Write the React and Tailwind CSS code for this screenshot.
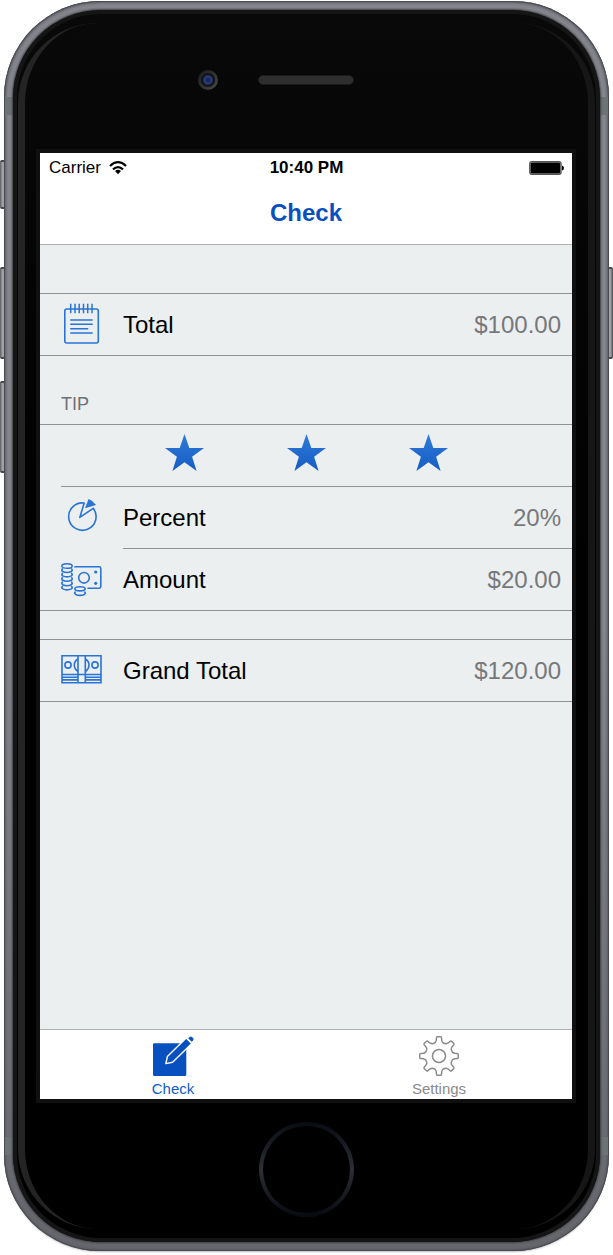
import React from "react";

const BLUE = "#2a74d6";

function NotepadIcon() {
  return (
    <svg viewBox="0 0 40 40" className="size-10 overflow-visible" fill="none" stroke={BLUE} strokeWidth="1.6" aria-hidden="true">
      <rect x="3.8" y="4" width="33.5" height="34" rx="2" />
      <path d="M9.7-1.2V8.3M14-1.2V8.3M18.2-1.2V8.3M22.5-1.2V8.3M26.7-1.2V8.3M31-1.2V8.3" strokeWidth="1.5" />
      <path d="M9.2 15H31.7M9.2 19.3H31.7M9.2 23.7H27.3M9.2 28H31.7" />
    </svg>
  );
}

function PieIcon() {
  return (
    <svg viewBox="0 0 40 40" className="size-10 overflow-visible" fill="none" stroke={BLUE} strokeWidth="1.6" strokeLinejoin="round" aria-hidden="true">
      <path d="M23.2 5 18.8 19.4 32.3 10.3A13.7 13.7 0 1 1 23.2 5Z" />
      <path d="M24 10.2 27.6 1Q32.2 2.6 35 7Z" fill={BLUE} stroke="none" />
    </svg>
  );
}

function CoinsIcon() {
  return (
    <svg viewBox="0 0 40 40" className="size-10 overflow-visible" fill="none" stroke={BLUE} strokeWidth="1.6" aria-hidden="true">
      <ellipse cx="6" cy="6" rx="5.2" ry="2.3" />
      {[10.2, 14.6, 19, 23.4, 27.6].map((y) => (
        <path key={y} d={`M1.8 ${y - 1.8}Q-.2 ${y} 1.8 ${y + 1.3}Q6 ${y + 3.3} 10.2 ${y + 1.3}Q12.2 ${y} 10.2 ${y - 1.8}`} />
      ))}
      <path d="M13.3 6.8H38.2Q39.8 6.8 39.8 8.4V26.6Q39.8 28.2 38.2 28.2H26.4" />
      <circle cx="23" cy="17.8" r="5.3" />
      <circle cx="34.7" cy="12" r="1.6" fill={BLUE} stroke="none" />
      <circle cx="34.7" cy="23.3" r="1.6" fill={BLUE} stroke="none" />
      <ellipse cx="19" cy="28.8" rx="5.2" ry="2.1" />
      <path d="M14.6 31.6Q12.8 33.2 14.6 34.4Q19 36.4 23.4 34.4Q25.2 33.2 23.4 31.6" />
    </svg>
  );
}

function CashIcon() {
  return (
    <svg viewBox="0 0 40 40" className="size-10 overflow-visible" fill="none" stroke={BLUE} strokeWidth="1.6" aria-hidden="true">
      <path d="M1 4.8H40V31.7H1ZM1 23.5H40M17 4.8V31.7M24.3 4.8V31.7" />
      <path d="M1 26.2H17M1 28.9H17M24.3 26.2H40M24.3 28.9H40" />
      <circle cx="7" cy="14" r="3.1" />
      <circle cx="34" cy="14" r="3.1" />
      <path d="M17 8Q13.3 10 13.3 14T17 20.5M24.3 8Q28 10 28 14T24.3 20.5" />
    </svg>
  );
}

function StarIcon({ id }) {
  return (
    <svg viewBox="0 0 39 37" className="h-[37px] w-[39px]" aria-hidden="true">
      <defs>
        <linearGradient id={id} x1="0" y1="0" x2="0" y2="1">
          <stop offset="0" stopColor="#2f7bd8" />
          <stop offset="1" stopColor="#165cc4" />
        </linearGradient>
      </defs>
      <path fill={`url(#${id})`} d="M19.5 0 24.3 14.1H39L27.1 22.7 31.6 37 19.5 28.3 7.4 37 11.9 22.7 0 14.1H14.7Z" />
    </svg>
  );
}

function ComposeIcon() {
  return (
    <svg viewBox="0 0 41 40" className="h-10 w-[41px] overflow-visible" aria-hidden="true">
      <path fill="#0850c0" d="M1.3 7.3H32Q33.3 7.3 33.3 8.6V38.7Q33.3 40 32 40H1.3Q0 40 0 38.7V8.6Q0 7.3 1.3 7.3Z" />
      <path d="M12.8 27.6 14.4 20.6 33.2 1.9 38.8 7.4 19.6 26.2Z" fill="#0850c0" stroke="#fff" strokeWidth="1.4" strokeLinejoin="round" />
      <path d="M35.2 2.3 36.7.9Q37.8-.1 38.9.9L40.1 2.1Q41.1 3.2 40.1 4.3L38.6 5.7Z" fill="#0850c0" />
    </svg>
  );
}

function gearPath() {
  const point = (r, deg) => {
    const a = ((deg - 90) * Math.PI) / 180;
    return `${(20.5 + r * Math.cos(a)).toFixed(2)} ${(20.5 + r * Math.sin(a)).toFixed(2)}`;
  };
  let d = "";
  for (let i = 0; i < 8; i++) {
    const c = i * 45;
    d += `${i ? "L" : "M"}${point(18.8, c - 8)}Q${point(19.9, c - 7.5)} ${point(19.8, c - 5)}`;
    d += `L${point(19.8, c + 5)}Q${point(19.9, c + 7.5)} ${point(18.8, c + 8)}`;
    d += `L${point(16.3, c + 10)}Q${point(14.6, c + 13)} ${point(14.2, c + 17)}`;
    d += `L${point(14.2, c + 28)}Q${point(14.6, c + 32)} ${point(16.3, c + 35)}`;
  }
  return d + "Z";
}

function GearIcon() {
  return (
    <svg viewBox="0 0 41 41" className="size-10" fill="none" stroke="#8a8a8a" strokeWidth="1.5" strokeLinejoin="round" aria-hidden="true">
      <path d={gearPath()} />
      <circle cx="20.5" cy="20.5" r="6.7" />
    </svg>
  );
}

function WifiIcon() {
  return (
    <svg viewBox="0 0 18 14" className="h-[14px] w-[18px]" fill="none" stroke="#000" strokeWidth="2.2" aria-hidden="true">
      <path d="M1 5Q9-2.6 17 5M4 8.4Q9 3.8 14 8.4" />
      <path d="M6 10.1Q9 7.6 12 10.1L9 13.2Z" fill="#000" stroke="none" />
    </svg>
  );
}

function BatteryIcon() {
  return (
    <svg viewBox="0 0 35 14" className="h-[14px] w-[35px]" aria-hidden="true">
      <rect x=".7" y=".7" width="31.4" height="12.6" rx="2" fill="#888" stroke="#555" strokeWidth="1.2" />
      <rect x="1.8" y="1.8" width="29.2" height="10.4" rx="1" fill="#000" />
      <path d="M33 4.5Q35 5 35 7T33 9.5Z" fill="#000" />
    </svg>
  );
}

function Row({ icon, label, value }) {
  return (
    <div className="flex h-[61px] items-center pr-[11px] pl-[21px] text-2xl">
      <span className="mr-[22px] shrink-0">{icon}</span>
      <dt className="flex-1 text-black">{label}</dt>
      <dd className="text-[#77787a]">{value}</dd>
    </div>
  );
}

function SideButton({ className }) {
  return (
    <div className={`absolute w-[6px] rounded-[2px] border-y-2 border-[#45464b] bg-linear-to-r from-[#5d5e63] via-[#b0b1b5] to-[#4a4b50] ${className}`} />
  );
}

function AntennaBand({ className }) {
  return <div className={`absolute h-[18px] w-2 bg-[#6d7372] ${className}`} />;
}

export default function App() {
  return (
    <div className="relative flex min-h-screen flex-col bg-white px-1 pt-px pb-1 font-['Liberation_Sans',Arial,sans-serif]">
      <SideButton className="top-[160px] left-0 h-[49px]" />
      <SideButton className="top-[267px] left-0 h-[92px]" />
      <SideButton className="top-[381px] left-0 h-[92px]" />
      <SideButton className="top-[267px] right-0 h-[92px]" />

      <div className="relative flex flex-1 flex-col rounded-[96px] bg-linear-to-b from-[#85868d] via-[#85868d] to-[#66676c] p-[9px] shadow-[inset_0_0_1px_1px_#484950,inset_0_0_3px_2px_#5f6068,0_2px_2px_-1px_#bbb]">
        <AntennaBand className="top-24 left-px" />
        <AntennaBand className="top-24 right-px" />
        <AntennaBand className="bottom-24 left-px" />
        <AntennaBand className="right-px bottom-24" />

        <div className="relative flex flex-1 flex-col rounded-[88px] bg-linear-to-b from-[#090909] to-black pr-[28px] pl-[27px] shadow-[inset_0_0_0_4px_#151516,0_0_2px_1px_#3c3d43]">
          <div className="absolute inset-x-[5px] inset-y-[13px] rounded-[80px] border-r-[7px] border-l-[7px] border-r-[#161616] border-l-[#242424]" />

          <div className="relative flex h-[143px] items-center justify-center gap-10 pb-[3px]">
            <div className="grid size-5 place-items-center rounded-full bg-linear-to-br from-[#1b1b1b] to-[#4a4a4a]">
              <div className="grid size-[14px] place-items-center rounded-full bg-[#121214]">
                <div className="size-[10px] rounded-full bg-radial from-[#161b35] via-[#2b3b80] to-[#10142a]" />
              </div>
            </div>
            <div className="h-[10px] w-24 rounded-full border border-[#1c1c1c] bg-[#2e2e2e]" />
            <div className="w-5" />
          </div>

          <div className="relative flex flex-1 flex-col bg-[#ebeff0] shadow-[0_0_0_4px_#101010]">
            <header className="border-b border-[#b0b2b2] bg-white">
              <div className="flex h-[30px] items-center pr-2 pl-[9px] text-[17px] text-black">
                <div className="flex flex-1 items-center gap-2">
                  <span>Carrier</span>
                  <WifiIcon />
                </div>
                <time className="font-bold">10:40 PM</time>
                <div className="flex flex-1 justify-end">
                  <BatteryIcon />
                </div>
              </div>
              <h1 className="flex h-[61px] items-center justify-center pb-[2px] text-2xl font-bold text-[#0850c0]">Check</h1>
            </header>

            <main className="flex-1 pt-12">
              <dl className="border-y border-[#909293]">
                <Row icon={<NotepadIcon />} label="Total" value="$100.00" />
              </dl>

              <h2 className="flex h-[68px] items-end pb-2 pl-[21px] text-lg leading-6 text-[#6d6f72]">TIP</h2>
              <section className="border-y border-[#909293]">
                <div className="flex h-[61px] items-center justify-center gap-[83px] pb-[6px]">
                  <button type="button" aria-label="1 star"><StarIcon id="star-1" /></button>
                  <button type="button" aria-label="2 stars"><StarIcon id="star-2" /></button>
                  <button type="button" aria-label="3 stars"><StarIcon id="star-3" /></button>
                </div>
                <div className="ml-[21px] h-px bg-[#909293]" />
                <dl>
                  <Row icon={<PieIcon />} label="Percent" value="20%" />
                </dl>
                <div className="ml-[83px] h-px bg-[#909293]" />
                <dl>
                  <Row icon={<CoinsIcon />} label="Amount" value="$20.00" />
                </dl>
              </section>

              <dl className="mt-7 border-y border-[#909293]">
                <Row icon={<CashIcon />} label="Grand Total" value="$120.00" />
              </dl>
            </main>

            <nav className="grid h-[70px] grid-cols-2 border-t border-[#b0b2b2] bg-white text-[15px] leading-[18px]">
              <a href="#check" aria-current="page" className="flex flex-col items-center gap-1 pt-[6px] text-[#0f5cc8]">
                <ComposeIcon />
                Check
              </a>
              <a href="#settings" className="flex flex-col items-center gap-1 pt-[6px] text-[#8a8a8a]">
                <GearIcon />
                Settings
              </a>
            </nav>
          </div>

          <div className="relative flex h-[143px] items-center justify-center pb-[3px]">
            <button
              type="button"
              aria-label="Home"
              className="size-[95px] rounded-full bg-linear-to-b from-[#090d12] via-[#2e2f37] to-[#070a0e] p-1"
            >
              <span className="block size-full rounded-full bg-black" />
            </button>
          </div>
        </div>
      </div>
    </div>
  );
}
